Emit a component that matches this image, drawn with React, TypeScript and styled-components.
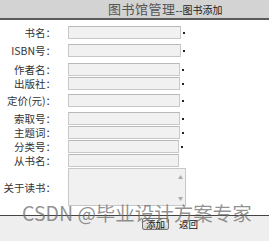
import React from "react";
import styled, { createGlobalStyle } from "styled-components";

const Global = createGlobalStyle`
  html, body { margin: 0; padding: 0; background: #fff; }
  body { width: 269px; height: 241px; overflow: hidden; font-family: "Noto Sans CJK SC", "Liberation Serif", serif; }
`;

const Page = styled.div`
  position: relative;
  width: 269px;
  height: 241px;
  display: flex;
  flex-direction: column;
`;

const Header = styled.div`
  height: 18px;
  background: #d3d3d3;
  border-bottom: 2px solid #5a5a5a;
  display: flex;
  align-items: center;
  padding-left: 108px;
  white-space: nowrap;
`;

const Title = styled.span`
  font-size: 13px;
  letter-spacing: 0.5px;
  color: #555;
  line-height: 18px;
`;

const SubTitle = styled.span`
  font-size: 10px;
  color: #222;
  line-height: 18px;
  margin-top: 2px;
`;

const Form = styled.div`
  display: flex;
  flex-direction: column;
  flex: 1;
`;

const Row = styled.div<{ $mt: number }>`
  display: flex;
  align-items: center;
  margin-top: ${(p) => p.$mt}px;
`;

const Label = styled.div`
  width: 56px;
  text-align: right;
  font-size: 10.5px;
  color: #333;
  line-height: 13px;
  margin-right: 12px;
  white-space: nowrap;
`;

const Input = styled.div<{ $w: number }>`
  box-sizing: border-box;
  width: ${(p) => p.$w}px;
  height: 13px;
  background: #f1f1f1;
  border: 1px solid #c8c8c8;
  border-top-color: #b8b8b8;
`;

const Star = styled.span`
  width: 2px;
  height: 2px;
  background: #223;
  margin-left: 2px;
`;

const TextArea = styled.div`
  box-sizing: border-box;
  width: 118px;
  height: 38px;
  background: #f1f1f1;
  border: 1px solid #c8c8c8;
  display: flex;
  justify-content: flex-end;
`;

const ScrollBar = styled.div`
  width: 9px;
  display: flex;
  flex-direction: column;
  justify-content: space-between;
  align-items: center;
  padding: 4px 0;
  font-size: 5px;
  color: #aaa;
`;

const Footer = styled.div`
  margin-top: 9px;
  flex: 1;
  border-top: 1px solid #444;
  background: #eeeeee;
  display: flex;
  align-items: flex-start;
  padding-left: 142px;
  padding-top: 2px;
`;

const Button = styled.div`
  box-sizing: border-box;
  height: 12px;
  padding: 0 3px;
  border: 1px solid #777;
  border-radius: 2px;
  background: linear-gradient(#f6f6f6, #cfcfcf);
  font-size: 9.5px;
  line-height: 10px;
  color: #111;
`;

const Back = styled.span`
  margin-left: 10px;
  font-size: 9.5px;
  line-height: 12px;
  color: #111;
`;

const Watermark = styled.div`
  position: absolute;
  left: 22px;
  top: 201px;
  font-family: "Noto Sans CJK SC", "Liberation Sans", sans-serif;
  font-size: 19.5px;
  line-height: 24px;
  color: rgba(110, 110, 110, 0.75);
  white-space: nowrap;
  pointer-events: none;
`;

const rows: { label: string; mt: number; w: number; star: boolean }[] = [
  { label: "书名：", mt: 6, w: 113, star: true },
  { label: "ISBN号：", mt: 5, w: 113, star: true },
  { label: "作者名：", mt: 6, w: 112, star: true },
  { label: "出版社：", mt: 1, w: 112, star: true },
  { label: "定价(元)：", mt: 4, w: 112, star: true },
  { label: "索取号：", mt: 5, w: 112, star: true },
  { label: "主题词：", mt: 1, w: 112, star: true },
  { label: "分类号：", mt: 1, w: 111, star: true },
  { label: "从书名：", mt: 1, w: 111, star: false },
];

export default function App() {
  return (
    <Page>
      <Global />
      <Header>
        <Title>图书馆管理</Title>
        <SubTitle>--图书添加</SubTitle>
      </Header>
      <Form>
        {rows.map((r) => (
          <Row key={r.label} $mt={r.mt}>
            <Label>{r.label}</Label>
            <Input $w={r.w} />
            {r.star && <Star />}
          </Row>
        ))}
        <Row $mt={1}>
          <Label>关于读书：</Label>
          <TextArea>
            <ScrollBar>
              <span>▲</span>
              <span>▼</span>
            </ScrollBar>
          </TextArea>
        </Row>
        <Footer>
          <Button>添加</Button>
          <Back>返回</Back>
        </Footer>
      </Form>
      <Watermark>CSDN @毕业设计方案专家</Watermark>
    </Page>
  );
}
